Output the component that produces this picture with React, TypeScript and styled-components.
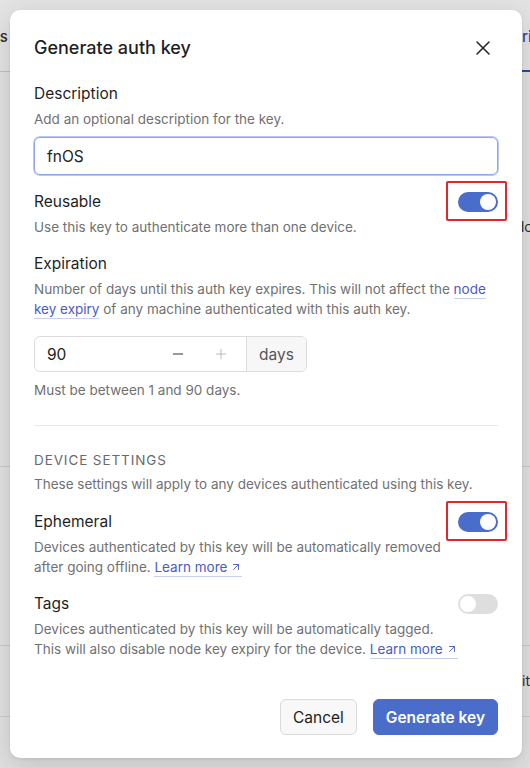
import React from 'react';
import styled, { createGlobalStyle } from 'styled-components';
import { X, Minus, Plus, ArrowUpRight } from 'lucide-react';

const GlobalStyle = createGlobalStyle`
  * { box-sizing: border-box; }
  html, body { margin: 0; padding: 0; }
  body {
    font-family: Inter, "Noto Sans", "Liberation Sans", sans-serif;
    -webkit-font-smoothing: antialiased;
    color: #232323;
  }
`;

const Screen = styled.div`
  position: relative;
  width: 530px;
  height: 768px;
  overflow: hidden;
  background: #fafafa;
`;

/* the page behind the dialog */
const Page = styled.div`
  display: flex;
  flex-direction: column;
`;

const TabBar = styled.div`
  height: 72px;
  display: flex;
  align-items: stretch;
  justify-content: space-between;
  border-bottom: 1px solid #d6d6d6;
  background: #fdfdfd;
`;

const Tab = styled.div<{ $active?: boolean }>`
  display: flex;
  align-items: center;
  font-size: 15px;
  font-weight: 500;
  white-space: nowrap;
  color: ${p => (p.$active ? '#3c4fa8' : '#333')};
  border-bottom: 2px solid ${p => (p.$active ? '#3c4fa8' : 'transparent')};
  margin-bottom: -1px;
  padding-top: 3px;
`;

const PageRow = styled.div<{ $h: number; $top?: number }>`
  height: ${p => p.$h}px;
  display: flex;
  align-items: ${p => (p.$top != null ? 'flex-start' : 'center')};
  padding-top: ${p => p.$top ?? 0}px;
  justify-content: flex-end;
  border-bottom: 1px solid #e2e2e2;
  font-size: 14px;
  line-height: 20px;
  color: #333;
  white-space: nowrap;
`;

const Backdrop = styled.div`
  position: absolute;
  inset: 0;
  background: rgba(0, 0, 0, 0.1);
  display: flex;
  align-items: flex-start;
  justify-content: flex-start;
  padding: 10px 8px 10px 10px;
`;

const Modal = styled.div`
  width: 512px;
  height: 748px;
  background: #fff;
  border-radius: 10px;
  box-shadow: 0 8px 28px rgba(0, 0, 0, 0.14), 0 1px 3px rgba(0, 0, 0, 0.08);
  padding: 24px 24px 23px 24px;
  display: flex;
  flex-direction: column;
`;

const Header = styled.div`
  display: flex;
  align-items: center;
  justify-content: space-between;
  height: 28px;
  margin-bottom: 21px;
`;

const Title = styled.h2`
  margin: 0;
  font-size: 18px;
  line-height: 28px;
  font-weight: 500;
  color: #1f1f1f;
`;

const CloseButton = styled.button`
  width: 28px;
  height: 28px;
  border: none;
  background: none;
  padding: 0;
  margin-right: 1px;
  display: flex;
  align-items: center;
  justify-content: center;
  color: #2a2a2a;
  cursor: pointer;
`;

const Field = styled.div<{ $gap?: number }>`
  display: flex;
  flex-direction: column;
  margin-top: ${p => p.$gap ?? 0}px;
`;

const LabelRow = styled.div`
  display: flex;
  align-items: center;
  justify-content: space-between;
  height: 22px;
`;

const Label = styled.div`
  font-size: 15.5px;
  line-height: 22px;
  font-weight: 400;
  color: #1f1f1f;
`;

const Hint = styled.div<{ $gap?: number }>`
  font-size: 13.5px;
  line-height: 20px;
  color: #717171;
  margin-top: ${p => p.$gap ?? 4}px;
`;

const Link = styled.a<{ $keep?: boolean }>`
  color: #4a5cbf;
  text-decoration: none;
  border-bottom: 1px solid #c9d0ef;
  padding-bottom: 1px;
  white-space: ${p => (p.$keep ? 'nowrap' : 'normal')};
  svg {
    vertical-align: -1px;
    margin-left: 3px;
  }
`;

const TextInput = styled.div`
  margin-top: 8px;
  height: 38px;
  border: 1px solid #8fa6ea;
  box-shadow: 0 0 0 1px #b9c7f3;
  border-radius: 6px;
  display: flex;
  align-items: center;
  padding-left: 12px;
  font-size: 15.5px;
  color: #222;
`;

const Toggle = styled.div<{ $on?: boolean; $marked?: boolean }>`
  position: relative;
  width: 40px;
  height: 20px;
  border-radius: 10px;
  background: ${p => (p.$on ? '#4a6dcc' : '#dedede')};
  flex-shrink: 0;

  &::before {
    content: '';
    position: absolute;
    top: 2px;
    left: ${p => (p.$on ? '22px' : '2px')};
    width: 16px;
    height: 16px;
    border-radius: 50%;
    background: #fff;
  }

  &::after {
    content: '';
    display: ${p => (p.$marked ? 'block' : 'none')};
    position: absolute;
    top: -11px;
    bottom: -9px;
    left: -12px;
    right: -9px;
    border: 2px solid #e3262a;
    border-radius: 2px;
  }
`;

const NumberField = styled.div`
  margin-top: 17px;
  width: 273px;
  height: 36px;
  border: 1px solid #dcdcdc;
  border-radius: 6px;
  display: flex;
  align-items: stretch;
  overflow: hidden;
`;

const NumberValue = styled.div`
  flex: 1;
  display: flex;
  align-items: center;
  padding-left: 12px;
  font-size: 15.5px;
  color: #222;
`;

const StepButton = styled.div<{ $muted?: boolean }>`
  width: 43px;
  display: flex;
  align-items: center;
  justify-content: center;
  color: ${p => (p.$muted ? '#b5b5b5' : '#333')};
`;

const Suffix = styled.div`
  width: 60px;
  margin-left: 4px;
  border-left: 1px solid #dcdcdc;
  background: #f7f7f7;
  display: flex;
  align-items: center;
  justify-content: center;
  font-size: 15.5px;
  color: #555;
`;

const Divider = styled.hr`
  border: none;
  border-top: 1px solid #e8e8e8;
  margin: 25px 0 0;
`;

const SectionTitle = styled.div`
  margin-top: 24px;
  font-size: 13.5px;
  line-height: 20px;
  letter-spacing: 0.9px;
  text-transform: uppercase;
  color: #6a6a6a;
`;

const Footer = styled.div`
  margin-top: auto;
  display: flex;
  justify-content: flex-end;
  gap: 16px;
`;

const Button = styled.button<{ $primary?: boolean }>`
  height: 36px;
  padding: 0 12px;
  border-radius: 6px;
  font-family: inherit;
  font-size: 15.5px;
  font-weight: ${p => (p.$primary ? 600 : 400)};
  border: 1px solid ${p => (p.$primary ? '#4a6dcc' : '#dadada')};
  background: ${p => (p.$primary ? '#4a6dcc' : '#f8f8f8')};
  color: ${p => (p.$primary ? '#fff' : '#222')};
  cursor: pointer;
`;

export default function App() {
  return (
    <Screen>
      <GlobalStyle />
      <Page>
        <TabBar>
          <Tab style={{ marginLeft: -27 }}>Logs</Tab>
          <Tab $active style={{ marginRight: -20 }}>Pairing</Tab>
        </TabBar>
        <PageRow $h={395} $top={145}>
          <span style={{ marginRight: -8 }}>Vendor</span>
        </PageRow>
        <PageRow $h={179} />
        <PageRow $h={71}>
          <span style={{ marginRight: -8 }}>Write</span>
        </PageRow>
      </Page>

      <Backdrop>
        <Modal>
          <Header>
            <Title>Generate auth key</Title>
            <CloseButton aria-label="Close">
              <X size={24} strokeWidth={1.6} />
            </CloseButton>
          </Header>

          <Field>
            <Label>Description</Label>
            <Hint>Add an optional description for the key.</Hint>
            <TextInput>fnOS</TextInput>
          </Field>

          <Field $gap={16}>
            <LabelRow>
              <Label>Reusable</Label>
              <Toggle $on $marked />
            </LabelRow>
            <Hint>Use this key to authenticate more than one device.</Hint>
          </Field>

          <Field $gap={16}>
            <Label>Expiration</Label>
            <Hint>
              Number of days until this auth key expires. This will not affect the{' '}
              <Link>node key expiry</Link> of any machine authenticated with this auth key.
            </Hint>
            <NumberField>
              <NumberValue>90</NumberValue>
              <StepButton>
                <Minus size={16} strokeWidth={1.6} />
              </StepButton>
              <StepButton $muted>
                <Plus size={16} strokeWidth={1.4} />
              </StepButton>
              <Suffix>days</Suffix>
            </NumberField>
            <Hint $gap={8}>Must be between 1 and 90 days.</Hint>
          </Field>

          <Divider />

          <SectionTitle>Device settings</SectionTitle>
          <Hint $gap={4}>These settings will apply to any devices authenticated using this key.</Hint>

          <Field $gap={17}>
            <LabelRow>
              <Label>Ephemeral</Label>
              <Toggle $on $marked />
            </LabelRow>
            <Hint>
              Devices authenticated by this key will be automatically removed
              <br />
              after going offline.{' '}
              <Link $keep>
                Learn more
                <ArrowUpRight size={12} strokeWidth={1.8} />
              </Link>
            </Hint>
          </Field>

          <Field $gap={16}>
            <LabelRow>
              <Label>Tags</Label>
              <Toggle />
            </LabelRow>
            <Hint>
              Devices authenticated by this key will be automatically tagged.
              <br />
              This will also disable node key expiry for the device.{' '}
              <Link $keep>
                Learn more
                <ArrowUpRight size={12} strokeWidth={1.8} />
              </Link>
            </Hint>
          </Field>

          <Footer>
            <Button>Cancel</Button>
            <Button $primary>Generate key</Button>
          </Footer>
        </Modal>
      </Backdrop>
    </Screen>
  );
}
